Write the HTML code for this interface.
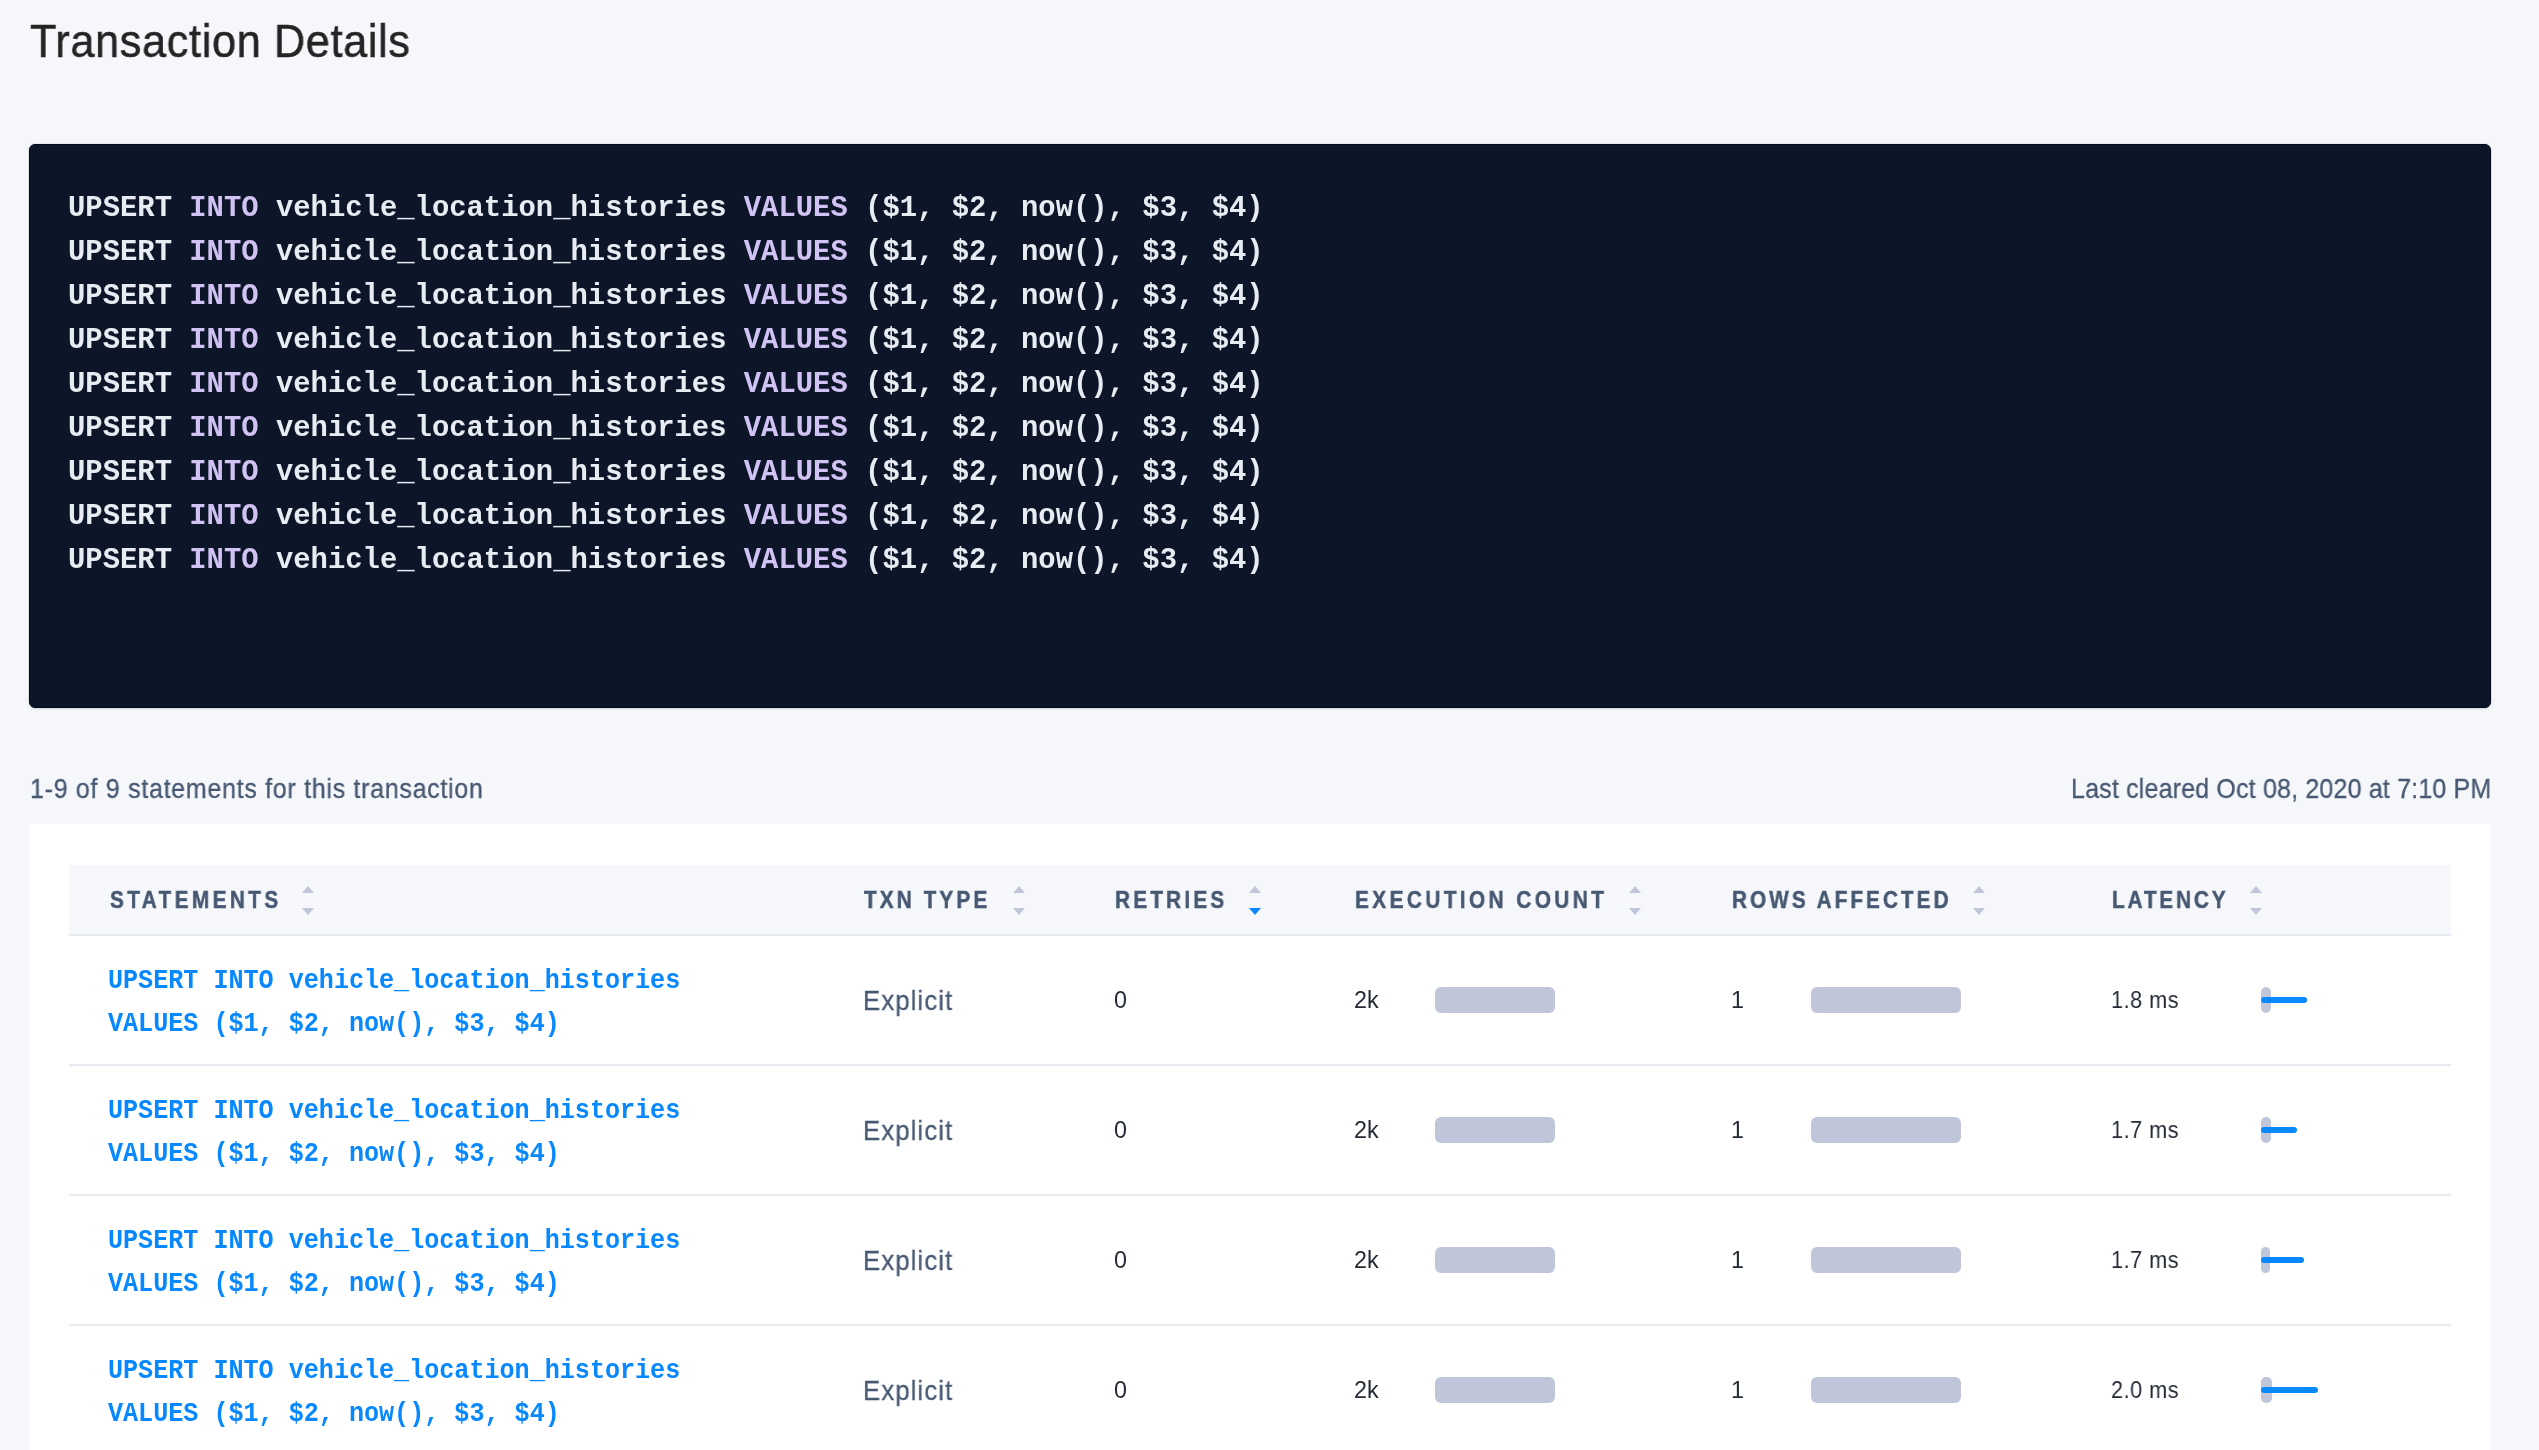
<!DOCTYPE html>
<html><head><meta charset="utf-8"><title>Transaction Details</title>
<style>
html,body{margin:0;padding:0;}
body{width:2539px;height:1450px;overflow:hidden;background:#f5f7fa;position:relative;}
.t{position:absolute;white-space:pre;will-change:transform;}
.kw{color:#d0c3f3;}
.tri{position:absolute;width:0;height:0;border-left:6px solid transparent;border-right:6px solid transparent;}
.up{border-bottom:7px solid #c0c6d9;}
.dn{border-top:7px solid #c0c6d9;}
.bar{position:absolute;background:#c0c6d9;border-radius:6px;}
</style></head><body>
<div class="t" style="left:29.50px;top:12.88px;font-family:'Liberation Sans', sans-serif;font-size:46.500px;line-height:56px;letter-spacing:0.684px;color:#242424;transform:scaleX(0.93);transform-origin:0 0;-webkit-text-stroke:0.5px #242424;">Transaction Details</div>
<div style="position:absolute;left:29px;top:144px;width:2462px;height:564px;box-sizing:border-box;background:#0d1628;border:1px solid #030b1b;border-radius:6px;box-shadow:0 0 2px rgba(20,30,60,0.18),0 1px 3px rgba(20,30,60,0.10);"></div>
<div class="t" style="left:68.00px;top:190.81px;font-family:'Liberation Mono', monospace;font-size:28.880px;line-height:35px;font-weight:700;color:#e7ecf3;transform:scaleY(1.03);transform-origin:0 25.19px;">UPSERT <span class="kw">INTO</span> vehicle_location_histories <span class="kw">VALUES</span> ($1, $2, now(), $3, $4)</div>
<div class="t" style="left:68.00px;top:234.81px;font-family:'Liberation Mono', monospace;font-size:28.880px;line-height:35px;font-weight:700;color:#e7ecf3;transform:scaleY(1.03);transform-origin:0 25.19px;">UPSERT <span class="kw">INTO</span> vehicle_location_histories <span class="kw">VALUES</span> ($1, $2, now(), $3, $4)</div>
<div class="t" style="left:68.00px;top:278.81px;font-family:'Liberation Mono', monospace;font-size:28.880px;line-height:35px;font-weight:700;color:#e7ecf3;transform:scaleY(1.03);transform-origin:0 25.19px;">UPSERT <span class="kw">INTO</span> vehicle_location_histories <span class="kw">VALUES</span> ($1, $2, now(), $3, $4)</div>
<div class="t" style="left:68.00px;top:322.81px;font-family:'Liberation Mono', monospace;font-size:28.880px;line-height:35px;font-weight:700;color:#e7ecf3;transform:scaleY(1.03);transform-origin:0 25.19px;">UPSERT <span class="kw">INTO</span> vehicle_location_histories <span class="kw">VALUES</span> ($1, $2, now(), $3, $4)</div>
<div class="t" style="left:68.00px;top:366.81px;font-family:'Liberation Mono', monospace;font-size:28.880px;line-height:35px;font-weight:700;color:#e7ecf3;transform:scaleY(1.03);transform-origin:0 25.19px;">UPSERT <span class="kw">INTO</span> vehicle_location_histories <span class="kw">VALUES</span> ($1, $2, now(), $3, $4)</div>
<div class="t" style="left:68.00px;top:410.81px;font-family:'Liberation Mono', monospace;font-size:28.880px;line-height:35px;font-weight:700;color:#e7ecf3;transform:scaleY(1.03);transform-origin:0 25.19px;">UPSERT <span class="kw">INTO</span> vehicle_location_histories <span class="kw">VALUES</span> ($1, $2, now(), $3, $4)</div>
<div class="t" style="left:68.00px;top:454.81px;font-family:'Liberation Mono', monospace;font-size:28.880px;line-height:35px;font-weight:700;color:#e7ecf3;transform:scaleY(1.03);transform-origin:0 25.19px;">UPSERT <span class="kw">INTO</span> vehicle_location_histories <span class="kw">VALUES</span> ($1, $2, now(), $3, $4)</div>
<div class="t" style="left:68.00px;top:498.81px;font-family:'Liberation Mono', monospace;font-size:28.880px;line-height:35px;font-weight:700;color:#e7ecf3;transform:scaleY(1.03);transform-origin:0 25.19px;">UPSERT <span class="kw">INTO</span> vehicle_location_histories <span class="kw">VALUES</span> ($1, $2, now(), $3, $4)</div>
<div class="t" style="left:68.00px;top:542.81px;font-family:'Liberation Mono', monospace;font-size:28.880px;line-height:35px;font-weight:700;color:#e7ecf3;transform:scaleY(1.03);transform-origin:0 25.19px;">UPSERT <span class="kw">INTO</span> vehicle_location_histories <span class="kw">VALUES</span> ($1, $2, now(), $3, $4)</div>
<div class="t" style="left:30.00px;top:772.67px;font-family:'Liberation Sans', sans-serif;font-size:26.900px;line-height:32px;letter-spacing:0.758px;color:#475872;transform:scaleX(0.93);transform-origin:0 0;-webkit-text-stroke:0.3px #475872;">1-9 of 9 statements for this transaction</div>
<div class="t" style="left:2071.20px;top:772.67px;font-family:'Liberation Sans', sans-serif;font-size:26.900px;line-height:32px;letter-spacing:0.184px;color:#475872;transform:scaleX(0.93);transform-origin:0 0;-webkit-text-stroke:0.3px #475872;">Last cleared Oct 08, 2020 at 7:10 PM</div>
<div style="position:absolute;left:29px;top:824px;width:2462px;height:700px;background:#ffffff;"></div>
<div style="position:absolute;left:69px;top:865px;width:2382px;height:69px;background:#f5f7fa;border-bottom:2px solid #e7ecf3;"></div>
<div class="t" style="left:109.70px;top:885.44px;font-family:'Liberation Sans', sans-serif;font-size:24.700px;line-height:30px;font-weight:700;letter-spacing:4.053px;color:#475872;transform:scaleX(0.84);transform-origin:0 0;-webkit-text-stroke:0.5px #475872;">STATEMENTS</div>
<div class="tri up" style="left:302px;top:886px;"></div>
<div class="tri dn" style="left:302px;top:908px;border-top-color:#c0c6d9;"></div>
<div class="t" style="left:864.30px;top:885.44px;font-family:'Liberation Sans', sans-serif;font-size:24.700px;line-height:30px;font-weight:700;letter-spacing:3.706px;color:#475872;transform:scaleX(0.84);transform-origin:0 0;-webkit-text-stroke:0.5px #475872;">TXN TYPE</div>
<div class="tri up" style="left:1013px;top:886px;"></div>
<div class="tri dn" style="left:1013px;top:908px;border-top-color:#c0c6d9;"></div>
<div class="t" style="left:1114.50px;top:885.44px;font-family:'Liberation Sans', sans-serif;font-size:24.700px;line-height:30px;font-weight:700;letter-spacing:3.817px;color:#475872;transform:scaleX(0.84);transform-origin:0 0;-webkit-text-stroke:0.5px #475872;">RETRIES</div>
<div class="tri up" style="left:1249px;top:886px;"></div>
<div class="tri dn" style="left:1249px;top:908px;border-top-color:#0788ff;"></div>
<div class="t" style="left:1355.40px;top:885.44px;font-family:'Liberation Sans', sans-serif;font-size:24.700px;line-height:30px;font-weight:700;letter-spacing:4.115px;color:#475872;transform:scaleX(0.84);transform-origin:0 0;-webkit-text-stroke:0.5px #475872;">EXECUTION COUNT</div>
<div class="tri up" style="left:1629px;top:886px;"></div>
<div class="tri dn" style="left:1629px;top:908px;border-top-color:#c0c6d9;"></div>
<div class="t" style="left:1731.90px;top:885.44px;font-family:'Liberation Sans', sans-serif;font-size:24.700px;line-height:30px;font-weight:700;letter-spacing:3.610px;color:#475872;transform:scaleX(0.84);transform-origin:0 0;-webkit-text-stroke:0.5px #475872;">ROWS AFFECTED</div>
<div class="tri up" style="left:1973px;top:886px;"></div>
<div class="tri dn" style="left:1973px;top:908px;border-top-color:#c0c6d9;"></div>
<div class="t" style="left:2111.90px;top:885.44px;font-family:'Liberation Sans', sans-serif;font-size:24.700px;line-height:30px;font-weight:700;letter-spacing:3.402px;color:#475872;transform:scaleX(0.84);transform-origin:0 0;-webkit-text-stroke:0.5px #475872;">LATENCY</div>
<div class="tri up" style="left:2250px;top:886px;"></div>
<div class="tri dn" style="left:2250px;top:908px;border-top-color:#c0c6d9;"></div>
<div style="position:absolute;left:69px;top:1064px;width:2382px;height:2px;background:#e7ecf3;"></div>
<div class="t" style="left:108.00px;top:967.32px;font-family:'Liberation Mono', monospace;font-size:25.100px;line-height:30px;font-weight:700;color:#0788ff;transform:scaleY(1.09);transform-origin:0 21.68px;">UPSERT INTO vehicle_location_histories</div>
<div class="t" style="left:108.00px;top:1010.32px;font-family:'Liberation Mono', monospace;font-size:25.100px;line-height:30px;font-weight:700;color:#0788ff;transform:scaleY(1.09);transform-origin:0 21.68px;">VALUES ($1, $2, now(), $3, $4)</div>
<div class="t" style="left:863.30px;top:983.93px;font-family:'Liberation Sans', sans-serif;font-size:27.600px;line-height:33px;letter-spacing:1.229px;color:#475872;transform:scaleX(0.93);transform-origin:0 0;-webkit-text-stroke:0.3px #475872;">Explicit</div>
<div class="t" style="left:1113.50px;top:985.92px;font-family:'Liberation Sans', sans-serif;font-size:23.300px;line-height:28px;color:#242a35;">0</div>
<div class="t" style="left:1353.50px;top:985.92px;font-family:'Liberation Sans', sans-serif;font-size:23.300px;line-height:28px;color:#242a35;">2k</div>
<div class="bar" style="left:1435px;top:987px;width:120px;height:26px;"></div>
<div class="t" style="left:1730.50px;top:985.92px;font-family:'Liberation Sans', sans-serif;font-size:23.300px;line-height:28px;color:#242a35;">1</div>
<div class="bar" style="left:1811px;top:987px;width:150px;height:26px;"></div>
<div class="t" style="left:2111.20px;top:985.92px;font-family:'Liberation Sans', sans-serif;font-size:23.300px;line-height:28px;letter-spacing:0.559px;color:#242a35;transform:scaleX(0.93);transform-origin:0 0;">1.8 ms</div>
<div class="bar" style="left:2261px;top:987px;width:10px;height:26px;border-radius:5px;"></div>
<div style="position:absolute;left:2261px;top:997px;width:46px;height:6px;background:#0788ff;border-radius:3px;"></div>
<div style="position:absolute;left:69px;top:1194px;width:2382px;height:2px;background:#e7ecf3;"></div>
<div class="t" style="left:108.00px;top:1097.32px;font-family:'Liberation Mono', monospace;font-size:25.100px;line-height:30px;font-weight:700;color:#0788ff;transform:scaleY(1.09);transform-origin:0 21.68px;">UPSERT INTO vehicle_location_histories</div>
<div class="t" style="left:108.00px;top:1140.32px;font-family:'Liberation Mono', monospace;font-size:25.100px;line-height:30px;font-weight:700;color:#0788ff;transform:scaleY(1.09);transform-origin:0 21.68px;">VALUES ($1, $2, now(), $3, $4)</div>
<div class="t" style="left:863.30px;top:1113.93px;font-family:'Liberation Sans', sans-serif;font-size:27.600px;line-height:33px;letter-spacing:1.229px;color:#475872;transform:scaleX(0.93);transform-origin:0 0;-webkit-text-stroke:0.3px #475872;">Explicit</div>
<div class="t" style="left:1113.50px;top:1115.92px;font-family:'Liberation Sans', sans-serif;font-size:23.300px;line-height:28px;color:#242a35;">0</div>
<div class="t" style="left:1353.50px;top:1115.92px;font-family:'Liberation Sans', sans-serif;font-size:23.300px;line-height:28px;color:#242a35;">2k</div>
<div class="bar" style="left:1435px;top:1117px;width:120px;height:26px;"></div>
<div class="t" style="left:1730.50px;top:1115.92px;font-family:'Liberation Sans', sans-serif;font-size:23.300px;line-height:28px;color:#242a35;">1</div>
<div class="bar" style="left:1811px;top:1117px;width:150px;height:26px;"></div>
<div class="t" style="left:2111.20px;top:1115.92px;font-family:'Liberation Sans', sans-serif;font-size:23.300px;line-height:28px;letter-spacing:0.559px;color:#242a35;transform:scaleX(0.93);transform-origin:0 0;">1.7 ms</div>
<div class="bar" style="left:2261px;top:1117px;width:10px;height:26px;border-radius:5px;"></div>
<div style="position:absolute;left:2261px;top:1127px;width:36px;height:6px;background:#0788ff;border-radius:3px;"></div>
<div style="position:absolute;left:69px;top:1324px;width:2382px;height:2px;background:#e7ecf3;"></div>
<div class="t" style="left:108.00px;top:1227.32px;font-family:'Liberation Mono', monospace;font-size:25.100px;line-height:30px;font-weight:700;color:#0788ff;transform:scaleY(1.09);transform-origin:0 21.68px;">UPSERT INTO vehicle_location_histories</div>
<div class="t" style="left:108.00px;top:1270.32px;font-family:'Liberation Mono', monospace;font-size:25.100px;line-height:30px;font-weight:700;color:#0788ff;transform:scaleY(1.09);transform-origin:0 21.68px;">VALUES ($1, $2, now(), $3, $4)</div>
<div class="t" style="left:863.30px;top:1243.93px;font-family:'Liberation Sans', sans-serif;font-size:27.600px;line-height:33px;letter-spacing:1.229px;color:#475872;transform:scaleX(0.93);transform-origin:0 0;-webkit-text-stroke:0.3px #475872;">Explicit</div>
<div class="t" style="left:1113.50px;top:1245.92px;font-family:'Liberation Sans', sans-serif;font-size:23.300px;line-height:28px;color:#242a35;">0</div>
<div class="t" style="left:1353.50px;top:1245.92px;font-family:'Liberation Sans', sans-serif;font-size:23.300px;line-height:28px;color:#242a35;">2k</div>
<div class="bar" style="left:1435px;top:1247px;width:120px;height:26px;"></div>
<div class="t" style="left:1730.50px;top:1245.92px;font-family:'Liberation Sans', sans-serif;font-size:23.300px;line-height:28px;color:#242a35;">1</div>
<div class="bar" style="left:1811px;top:1247px;width:150px;height:26px;"></div>
<div class="t" style="left:2111.20px;top:1245.92px;font-family:'Liberation Sans', sans-serif;font-size:23.300px;line-height:28px;letter-spacing:0.559px;color:#242a35;transform:scaleX(0.93);transform-origin:0 0;">1.7 ms</div>
<div class="bar" style="left:2261px;top:1247px;width:9px;height:26px;border-radius:5px;"></div>
<div style="position:absolute;left:2261px;top:1257px;width:43px;height:6px;background:#0788ff;border-radius:3px;"></div>
<div style="position:absolute;left:69px;top:1454px;width:2382px;height:2px;background:#e7ecf3;"></div>
<div class="t" style="left:108.00px;top:1357.32px;font-family:'Liberation Mono', monospace;font-size:25.100px;line-height:30px;font-weight:700;color:#0788ff;transform:scaleY(1.09);transform-origin:0 21.68px;">UPSERT INTO vehicle_location_histories</div>
<div class="t" style="left:108.00px;top:1400.32px;font-family:'Liberation Mono', monospace;font-size:25.100px;line-height:30px;font-weight:700;color:#0788ff;transform:scaleY(1.09);transform-origin:0 21.68px;">VALUES ($1, $2, now(), $3, $4)</div>
<div class="t" style="left:863.30px;top:1373.93px;font-family:'Liberation Sans', sans-serif;font-size:27.600px;line-height:33px;letter-spacing:1.229px;color:#475872;transform:scaleX(0.93);transform-origin:0 0;-webkit-text-stroke:0.3px #475872;">Explicit</div>
<div class="t" style="left:1113.50px;top:1375.92px;font-family:'Liberation Sans', sans-serif;font-size:23.300px;line-height:28px;color:#242a35;">0</div>
<div class="t" style="left:1353.50px;top:1375.92px;font-family:'Liberation Sans', sans-serif;font-size:23.300px;line-height:28px;color:#242a35;">2k</div>
<div class="bar" style="left:1435px;top:1377px;width:120px;height:26px;"></div>
<div class="t" style="left:1730.50px;top:1375.92px;font-family:'Liberation Sans', sans-serif;font-size:23.300px;line-height:28px;color:#242a35;">1</div>
<div class="bar" style="left:1811px;top:1377px;width:150px;height:26px;"></div>
<div class="t" style="left:2111.20px;top:1375.92px;font-family:'Liberation Sans', sans-serif;font-size:23.300px;line-height:28px;letter-spacing:0.559px;color:#242a35;transform:scaleX(0.93);transform-origin:0 0;">2.0 ms</div>
<div class="bar" style="left:2261px;top:1377px;width:11px;height:26px;border-radius:5px;"></div>
<div style="position:absolute;left:2261px;top:1387px;width:57px;height:6px;background:#0788ff;border-radius:3px;"></div>
</body></html>
